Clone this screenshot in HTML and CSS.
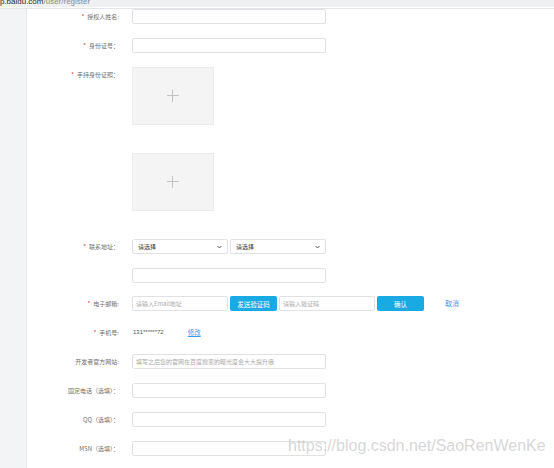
FILE: index.html
```html
<!DOCTYPE html>
<html lang="zh">
<head>
<meta charset="utf-8">
<title>register</title>
<link rel="stylesheet" href="styles.css">
</head>
<body>
<div class="urlbar"><span class="host">app.baidu.com</span><span class="path">/user/register</span></div>
<div class="divider"></div>
<div class="page">
  <aside class="sidebar"></aside>
  <main class="main">
    <form class="form">
      <div class="row">
        <label class="label"><span class="star">*</span>授权人姓名:</label>
        <div class="field"><input class="input" type="text"></div>
      </div>
      <div class="row">
        <label class="label"><span class="star">*</span>身份证号：</label>
        <div class="field"><input class="input" type="text"></div>
      </div>
      <div class="row row-upload">
        <label class="label"><span class="star">*</span>手持身份证照：</label>
        <div class="field">
          <div class="upload">
            <svg width="12" height="12" viewBox="0 0 12 12"><path d="M5.5 0V12M0 5.5H12" stroke="#c2c2c2" stroke-width="1" fill="none"/></svg>
          </div>
        </div>
      </div>
      <div class="row row-upload">
        <label class="label"></label>
        <div class="field">
          <div class="upload">
            <svg width="12" height="12" viewBox="0 0 12 12"><path d="M5.5 0V12M0 5.5H12" stroke="#c2c2c2" stroke-width="1" fill="none"/></svg>
          </div>
        </div>
      </div>
      <div class="row">
        <label class="label"><span class="star">*</span>联系地址：</label>
        <div class="field">
          <div class="select"><span>请选择</span><svg width="5" height="4" viewBox="0 0 5 4"><path d="M0.5 1L2.5 3L4.5 1" stroke="#444" stroke-width="0.9" fill="none"/></svg></div>
          <div class="select"><span>请选择</span><svg width="5" height="4" viewBox="0 0 5 4"><path d="M0.5 1L2.5 3L4.5 1" stroke="#444" stroke-width="0.9" fill="none"/></svg></div>
        </div>
      </div>
      <div class="row">
        <label class="label"></label>
        <div class="field"><input class="input" type="text"></div>
      </div>
      <div class="row row-email">
        <label class="label"><span class="star">*</span>电子邮箱:</label>
        <div class="field">
          <input class="input input-half" type="text" placeholder="请输入Email地址">
          <button class="btn" type="button">发送验证码</button>
          <input class="input input-half" type="text" placeholder="请输入验证码">
          <button class="btn" type="button">确认</button>
          <a class="link cancel" href="#">取消</a>
        </div>
      </div>
      <div class="row">
        <label class="label"><span class="star">*</span>手机号:</label>
        <div class="field">
          <span class="phone">131******72</span>
          <a class="link edit" href="#">修改</a>
        </div>
      </div>
      <div class="row">
        <label class="label">开发者官方网站:</label>
        <div class="field"><input class="input" type="text" placeholder="填写之后您的官网在百度搜索的曝光度会大大提升哦"></div>
      </div>
      <div class="row">
        <label class="label">固定电话（选填）：</label>
        <div class="field"><input class="input" type="text"></div>
      </div>
      <div class="row">
        <label class="label">QQ（选填）：</label>
        <div class="field"><input class="input" type="text"></div>
      </div>
      <div class="row">
        <label class="label">MSN（选填）：</label>
        <div class="field"><input class="input" type="text"></div>
      </div>
    </form>
  </main>
</div>
<div class="watermark">https://blog.csdn.net/SaoRenWenKe</div>
</body>
</html>
```

FILE: styles.css
```css
* { box-sizing: border-box; }

html, body {
  margin: 0;
  padding: 0;
  background: #ffffff;
  height: 100%;
  overflow: hidden;
}

body {
  font-family: "Noto Sans CJK SC", "Liberation Sans", sans-serif;
  color: #555;
  position: relative;
}

.urlbar {
  height: 7px;
  background: #eff0f2;
  overflow: hidden;
  font-family: "Liberation Sans", Arial, sans-serif;
  font-size: 8px;
  line-height: 3px;
  white-space: nowrap;
  text-indent: -9px;
}

.host { color: #2b2b2b; }
.path { color: #8d8d8d; }

.divider {
  height: 1px;
  margin-top: 1px;
  background: #e3e5e8;
}

.page {
  display: flex;
  height: calc(100% - 9px);
}

.sidebar {
  width: 27px;
  flex-shrink: 0;
  background: #f3f4f6;
  border-right: 1px solid #e6e8eb;
}

.main {
  flex: 1;
  padding-top: 0;
}

.form {
  display: flex;
  flex-direction: column;
  gap: 14px;
}

.row {
  display: flex;
  align-items: flex-start;
}

.row-upload { margin-bottom: 14px; }
.row-email { margin-top: -1px; }

.label {
  width: 92px;
  margin-right: 13px;
  flex-shrink: 0;
  text-align: right;
  font-size: 6px;
  line-height: 15px;
  height: 15px;
  color: #707070;
  white-space: nowrap;
}

.star {
  color: #e8403f;
  margin-right: 3px;
}

.field {
  display: flex;
  align-items: center;
  gap: 2px;
}

.input {
  width: 194px;
  height: 15px;
  border: 1px solid #dfe1e4;
  border-radius: 2px;
  padding: 0 3px;
  font-family: "Noto Sans CJK SC", "Liberation Sans", sans-serif;
  font-size: 6px;
  color: #333;
  background: #fff;
  outline: none;
  margin: 0;
}

.input::placeholder { color: #aaa; }

.input-half { width: 96px; }

.btn {
  width: 47px;
  height: 15px;
  border: none;
  border-radius: 2px;
  background: #19aae4;
  color: #fff;
  font-family: "Noto Sans CJK SC", "Liberation Sans", sans-serif;
  font-size: 6.5px;
  padding: 0;
  margin: 0;
}

.select {
  width: 96px;
  height: 15px;
  border: 1px solid #dfe1e4;
  border-radius: 2px;
  display: flex;
  align-items: center;
  justify-content: space-between;
  padding: 0 5px;
  font-size: 6px;
  color: #333;
  background: #fff;
}

.upload {
  width: 82px;
  height: 58px;
  background: #f4f4f4;
  border: 1px solid #ebebeb;
  display: flex;
  align-items: center;
  justify-content: center;
}

.link {
  color: #3b9de8;
  font-size: 6.5px;
  line-height: 15px;
}

.cancel {
  margin-left: 19px;
  text-decoration: none;
  font-size: 7px;
}

.edit {
  margin-left: 22px;
  text-decoration: underline;
}

.phone {
  font-family: "Liberation Sans", Arial, sans-serif;
  font-size: 6px;
  line-height: 15px;
  color: #555;
  padding-left: 1px;
}

.watermark {
  position: absolute;
  left: 288px;
  top: 437px;
  font-family: "Liberation Sans", Arial, sans-serif;
  font-size: 16px;
  color: rgba(180, 180, 180, 0.55);
  white-space: nowrap;
  pointer-events: none;
}
```
